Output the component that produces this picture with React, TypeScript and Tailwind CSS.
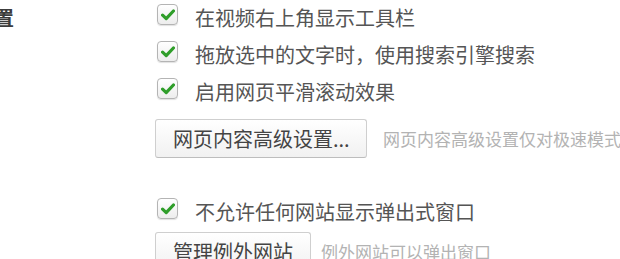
import React from "react";

const font = { fontFamily: '"Noto Sans CJK SC", "Liberation Sans", sans-serif' };

function Check() {
  return (
    <span className="flex h-[21px] w-[21px] shrink-0 items-center justify-center rounded-[4px] border border-[#b4b4b4] bg-gradient-to-b from-white to-[#ededed] shadow-[0_1px_1px_rgba(0,0,0,0.12)]">
      <svg width="14" height="12" viewBox="0 0 14 12">
        <path
          d="M1.6 6.2 L5.2 9.6 L12.4 2"
          fill="none"
          stroke="#2f9e2a"
          strokeWidth="3.2"
          strokeLinecap="round"
          strokeLinejoin="round"
        />
      </svg>
    </span>
  );
}

function CheckRow({ label, className = "" }: { label: string; className?: string }) {
  return (
    <div className={`flex items-start gap-[17px] pt-[4px] ${className}`}>
      <Check />
      <span className="whitespace-nowrap text-[20px] leading-[28px] text-[#555]">{label}</span>
    </div>
  );
}

function Button({ children, className = "" }: { children: React.ReactNode; className?: string }) {
  return (
    <button
      className={`h-[39px] shrink-0 whitespace-nowrap rounded-[3px] border border-[#cfcfcf] border-b-[#bdbdbd] bg-gradient-to-b from-white to-[#f1f1f1] pl-[17px] text-left text-[20px] leading-[36px] text-[#444] ${className}`}
    >
      {children}
    </button>
  );
}

export default function App() {
  const rows = ["在视频右上角显示工具栏", "拖放选中的文字时，使用搜索引擎搜索", "启用网页平滑滚动效果"];

  return (
    <main className="h-[259px] w-[620px] overflow-hidden bg-white" style={font}>
      <div className="flex">
        <div className="flex w-[14px] shrink-0 justify-end pt-[4px]">
          <span className="whitespace-nowrap text-[20px] font-bold leading-[28px] text-[#3c3c3c]">置</span>
        </div>
        <div className="ml-[143px] flex flex-col">
          {rows.map((label) => (
            <CheckRow key={label} label={label} className="h-[37px]" />
          ))}
          <div className="ml-[-2px] mt-[8px] flex items-center gap-[16px]">
            <Button className="w-[212px]">网页内容高级设置...</Button>
            <span className="whitespace-nowrap text-[17px] text-[#b3b3b3]">网页内容高级设置仅对极速模式有效</span>
          </div>
          <CheckRow label="不允许任何网站显示弹出式窗口" className="mt-[36px] h-[38px]" />
          <div className="ml-[-2px] flex items-center gap-[10px]">
            <Button className="w-[156px]">管理例外网站</Button>
            <span className="whitespace-nowrap text-[17px] text-[#b3b3b3]">例外网站可以弹出窗口</span>
          </div>
        </div>
      </div>
    </main>
  );
}
